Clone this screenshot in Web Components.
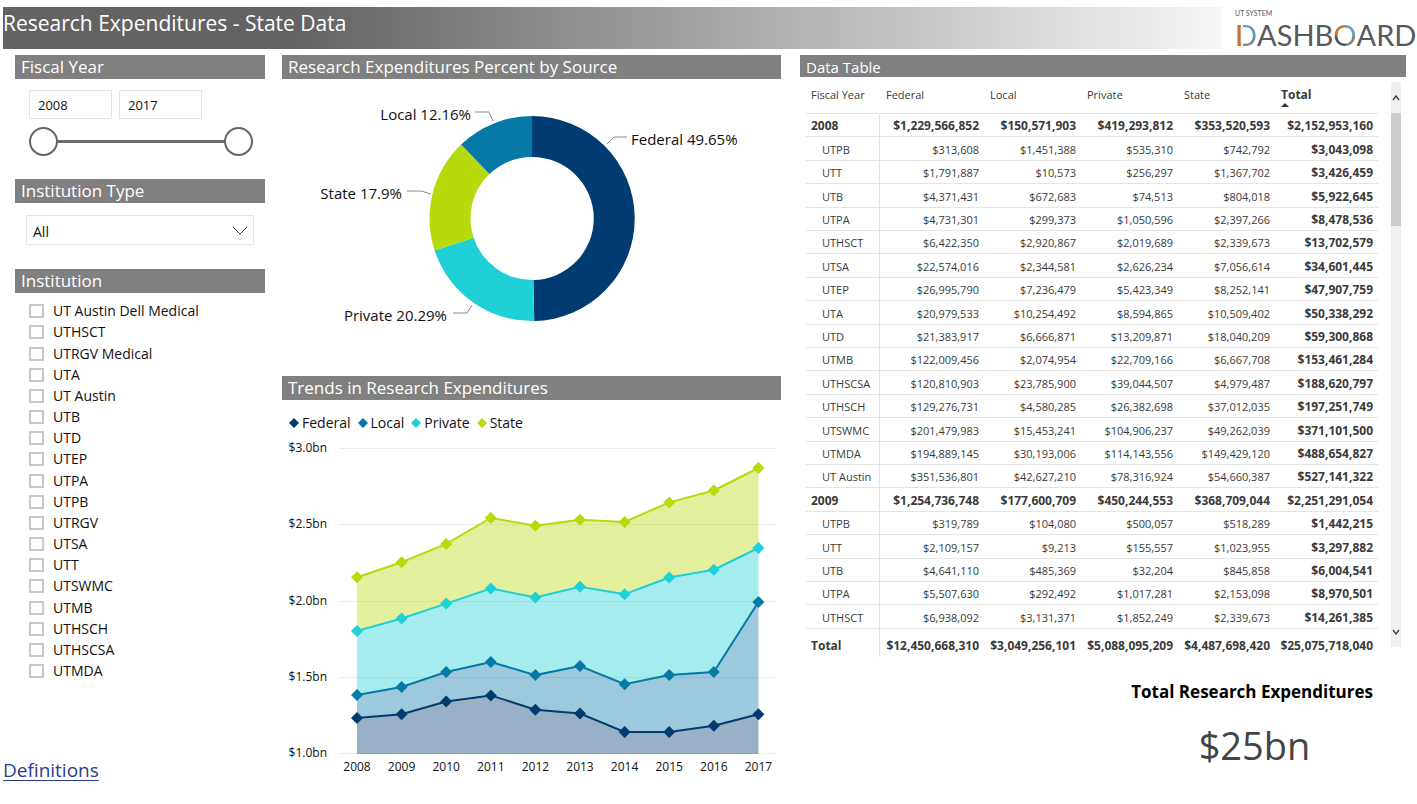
<!DOCTYPE html>
<html lang="en">
<head>
<meta charset="utf-8">
<meta name="viewport" content="width=device-width, initial-scale=1">
<title>Research Expenditures - State Data</title>
<style>
  html { background: #fff; }
  body {
    margin: 0;
    font-family: "Open Sans", "Noto Sans", sans-serif;
    color: #111;
    --bar: #808080;
    --line: #e4e4e4;
    --federal: #003c71;
    --local: #0779a7;
    --private: #1fd0d6;
    --state: #b6da0b;
  }
</style>
</head>
<body>
<research-dashboard></research-dashboard>

<script>
const define = (name, html, setup) => {
  const template = document.createElement('template');
  template.innerHTML = html;
  customElements.define(name, class extends HTMLElement {
    constructor() {
      super();
      this.attachShadow({ mode: 'open' }).append(template.content.cloneNode(true));
      if (setup) setup(this.shadowRoot, this);
    }
  });
};

/* ---------- logo ---------- */
define('dash-logo', `
  <style>
    :host { display: block; font-family: Lato, sans-serif; color: #58595b; white-space: nowrap; }
    .small { display: block; font-size: 7px; line-height: 8px; }
    .word { display: flex; font-size: 29px; line-height: 35px; }
    .d, .o { color: transparent; -webkit-background-clip: text; background-clip: text; }
    .d { background-image: linear-gradient(90deg, #d0702c 0 6px, #fff 6px 8px, transparent 8px),
                           linear-gradient(180deg, #5f9fba 0 50%, #808285 70%); }
    .o { background-image: conic-gradient(#5f9fba 0 90deg, #808285 100deg 170deg, #4d4e50 180deg 250deg, #d0702c 270deg 350deg, #5f9fba 360deg); }
  </style>
  <span class="small">UT SYSTEM</span>
  <span class="word"><span class="d">D</span><span>ASHB</span><span class="o">O</span><span>ARD</span></span>
`);

/* ---------- page header ---------- */
define('dash-header', `
  <style>
    :host { display: flex; align-items: flex-start; gap: 13px; padding: 7px 0 0 3px; }
    h1 {
      flex: 1; margin: 0; height: 42px; font-size: 21px; font-weight: 400; line-height: 33px;
      color: #fff; background: linear-gradient(90deg, #636363 24%, #f7f7f7);
    }
    dash-logo { flex: none; width: 182px; padding-top: 2px; }
  </style>
  <h1><slot></slot></h1>
  <dash-logo></dash-logo>
`);

/* ---------- titled panel ---------- */
define('dash-panel', `
  <style>
    :host { display: block; }
    h2 {
      margin: 0; padding: 0 6px; background: var(--bar); color: #fff;
      font-size: 17px; font-weight: 400; line-height: 24px;
    }
    :host([compact]) h2 { font-size: 15px; line-height: 22px; padding-top: 1px; height: 21px; overflow: hidden; }
  </style>
  <h2></h2>
  <slot></slot>
`, (root, host) => {
  root.querySelector('h2').textContent = host.getAttribute('heading');
});

/* ---------- fiscal year range ---------- */
define('year-range', `
  <style>
    :host { display: block; padding: 11px 12px 0 14px; }
    .boxes { display: flex; gap: 7px; }
    .boxes input {
      box-sizing: border-box; width: 83px; height: 29px; border: 1px solid var(--line); padding: 0 8px;
      font: 13px "Open Sans", sans-serif; color: #111; background: #fff;
    }
    .track { display: grid; align-items: center; margin-top: 8px; }
    .track > * { grid-area: 1 / 1; }
    .bar { height: 3px; margin: 0 14px; background: #6b6b6b; }
    .track input {
      appearance: none; -webkit-appearance: none; margin: 0; width: 100%; height: 29px;
      background: transparent; pointer-events: none;
    }
    .track input::-webkit-slider-thumb {
      -webkit-appearance: none; box-sizing: border-box; width: 29px; height: 29px; border-radius: 50%;
      border: 2px solid #666; background: #fff; pointer-events: auto;
    }
  </style>
  <div class="boxes">
    <input type="text" value="2008" aria-label="From year">
    <input type="text" value="2017" aria-label="To year">
  </div>
  <div class="track">
    <span class="bar"></span>
    <input type="range" min="2008" max="2017" value="2008" aria-label="First year">
    <input type="range" min="2008" max="2017" value="2017" aria-label="Last year">
  </div>
`, root => {
  const boxes = root.querySelectorAll('.boxes input');
  root.querySelectorAll('.track input').forEach((range, i) =>
    range.addEventListener('input', () => { boxes[i].value = range.value; }));
});

/* ---------- institution type ---------- */
define('type-picker', `
  <style>
    :host { display: block; padding: 12px 11px 0; }
    .wrap { display: grid; align-items: center; }
    .wrap > * { grid-area: 1 / 1; }
    select {
      appearance: none; -webkit-appearance: none; width: 100%; height: 30px; border: 1px solid var(--line);
      border-radius: 0; background: #fff; padding: 2px 6px 0; font: 14px "Open Sans", sans-serif; color: #111;
    }
    svg { justify-self: end; margin-right: 6px; pointer-events: none; }
  </style>
  <div class="wrap">
    <select aria-label="Institution Type"><option>All</option></select>
    <svg width="16" height="9" viewBox="0 0 16 9"><path d="M1 1l7 7 7-7" fill="none" stroke="#333"/></svg>
  </div>
`);

/* ---------- institution check list ---------- */
define('institution-list', `
  <style>
    :host { display: block; padding: 7px 0 0 14px; }
    ul { list-style: none; margin: 0; padding: 0; }
    li { height: 21px; }
    li:nth-child(6n+2) { height: 22px; }
    label { display: flex; align-items: center; gap: 9px; font-size: 14px; line-height: 21px; }
    input {
      appearance: none; -webkit-appearance: none; box-sizing: border-box; margin: 0; width: 15px; height: 14px;
      border: 2px solid #c8c8c8; background: #fff;
    }
    input:checked { background: #666; }
  </style>
  <ul></ul>
`, root => {
  const names = ['UT Austin Dell Medical', 'UTHSCT', 'UTRGV Medical', 'UTA', 'UT Austin', 'UTB', 'UTD', 'UTEP', 'UTPA',
    'UTPB', 'UTRGV', 'UTSA', 'UTT', 'UTSWMC', 'UTMB', 'UTHSCH', 'UTHSCSA', 'UTMDA'];
  root.querySelector('ul').innerHTML =
    names.map(n => `<li><label><input type="checkbox">${n}</label></li>`).join('');
});

/* ---------- donut ---------- */
define('donut-chart', `
  <style>
    :host { display: block; }
    svg { display: block; width: 100%; }
    text { font-size: 15px; fill: #111; }
    polyline { fill: none; stroke: #8a8a8a; }
  </style>
  <svg viewBox="0 0 499 297" role="img" aria-label="Research expenditures percent by source">
    <g id="ring"></g>
    <polyline points="325,65 332,58 345,58"/>
    <polyline points="211,42 207,33 193,33"/>
    <polyline points="149,115 139,112 125,112"/>
    <polyline points="190,226 185,234 171,234"/>
    <text x="349" y="66">Federal 49.65%</text>
    <text x="189" y="41" text-anchor="end">Local 12.16%</text>
    <text x="120" y="120" text-anchor="end">State 17.9%</text>
    <text x="165" y="242" text-anchor="end">Private 20.29%</text>
  </svg>
`, root => {
  const slices = [['federal', 49.65], ['private', 20.29], ['state', 17.9], ['local', 12.16]];
  const cx = 250, cy = 139.5, R = 102.5, r = 61.5;
  const at = (p, rad) => {
    const a = p / 100 * 2 * Math.PI;
    return (cx + rad * Math.sin(a)).toFixed(2) + ' ' + (cy - rad * Math.cos(a)).toFixed(2);
  };
  let start = 0;
  root.querySelector('#ring').innerHTML = slices.map(([name, share]) => {
    const end = start + share;
    const d = `M${at(start, R)}A${R} ${R} 0 0 1 ${at(end, R)}L${at(end, r)}A${r} ${r} 0 0 0 ${at(start, r)}Z`;
    start = end;
    return `<path d="${d}" style="fill:var(--${name})"/>`;
  }).join('');
});

/* ---------- trend ---------- */
define('trend-chart', `
  <style>
    :host { display: block; }
    ul { display: flex; gap: 6px; list-style: none; margin: 0; padding: 12px 6px 0; font-size: 14px; line-height: 22px; }
    li { display: flex; align-items: center; gap: 3px; }
    li svg { width: 11px; height: 11px; }
    .plot { display: block; width: 100%; }
    text { font-size: 12px; fill: #111; }
    .grid { stroke: #ececf0; }
  </style>
  <ul>
    <li><svg viewBox="0 0 11 11"><path d="M6 0l5 5-5 5-5-5z" style="fill:var(--federal)"/></svg>Federal</li>
    <li><svg viewBox="0 0 11 11"><path d="M6 0l5 5-5 5-5-5z" style="fill:var(--local)"/></svg>Local</li>
    <li><svg viewBox="0 0 11 11"><path d="M6 0l5 5-5 5-5-5z" style="fill:var(--private)"/></svg>Private</li>
    <li><svg viewBox="0 0 11 11"><path d="M6 0l5 5-5 5-5-5z" style="fill:var(--state)"/></svg>State</li>
  </ul>
  <svg class="plot" viewBox="0 0 499 345" role="img" aria-label="Trends in research expenditures"></svg>
`, root => {
  const data = {
    federal: [1.2296, 1.2547, 1.338, 1.378, 1.284, 1.259, 1.138, 1.138, 1.179, 1.254],
    local: [1.38, 1.433, 1.531, 1.597, 1.511, 1.57, 1.451, 1.511, 1.531, 1.99],
    private: [1.8, 1.882, 1.98, 2.079, 2.02, 2.09, 2.041, 2.151, 2.202, 2.344],
    state: [2.153, 2.251, 2.371, 2.541, 2.49, 2.53, 2.515, 2.643, 2.721, 2.869]
  };
  const x = i => +(75 + i * 44.6).toFixed(1);
  const y = v => +(319 - (v - 1) * 152.5).toFixed(1);
  let out = '';
  for (const v of [3, 2.5, 2, 1.5, 1]) {
    const gy = Math.round(y(v)) + 0.5;
    out += `<path class="grid" d="M57 ${gy}H494"/><text x="45" y="${Math.round(y(v)) + 4}" text-anchor="end">$${v.toFixed(1)}bn</text>`;
  }
  let floor = Array(10).fill(0.994), areas = '', lines = '';
  for (const [name, values] of Object.entries(data)) {
    const top = values.map((v, i) => x(i) + ' ' + y(v));
    const base = floor.map((v, i) => x(i) + ' ' + y(v)).reverse();
    areas += `<path d="M${top.join('L')}L${base.join('L')}Z" style="fill:var(--${name});fill-opacity:.4"/>`;
    lines += `<path d="M${top.join('L')}" style="fill:none;stroke:var(--${name});stroke-width:2"/>`;
    lines += values.map((v, i) => `<path d="M${x(i)} ${y(v) - 6}l6 6-6 6-6-6z" style="fill:var(--${name})"/>`).join('');
    floor = values;
  }
  out += areas + lines;
  for (let i = 0; i < 10; i++) out += `<text x="${x(i)}" y="337" text-anchor="middle">${2008 + i}</text>`;
  root.querySelector('.plot').innerHTML = out;
});

/* ---------- scroll rail ---------- */
define('scroll-rail', `
  <style>
    :host { display: flex; flex-direction: column; width: 10px; background: #f0f0f0; }
    button { display: grid; place-items: center; flex: none; height: 31px; border: 0; padding: 0; background: none; }
    .thumb { height: 113px; background: #cdcdcd; }
    .rest { flex: 1; }
  </style>
  <button type="button" aria-label="Scroll up"><svg width="8" height="6" viewBox="0 0 8 6"><path d="M1 5l3-4 3 4" fill="none" stroke="#444" stroke-width="1.4"/></svg></button>
  <div class="thumb"></div>
  <div class="rest"></div>
  <button type="button" aria-label="Scroll down"><svg width="8" height="6" viewBox="0 0 8 6"><path d="M1 1l3 4 3-4" fill="none" stroke="#444" stroke-width="1.4"/></svg></button>
`);

/* ---------- data matrix ---------- */
define('data-matrix', `
  <style>
    :host { display: flex; align-items: flex-start; gap: 13px; padding: 5px 5px 0 6px; }
    table { flex: 1; width: 0; table-layout: fixed; border-collapse: separate; border-spacing: 0; color: #3a3a3a; font-size: 11px; }
    th, td { padding: 0 5px; border-bottom: 1px solid var(--line); white-space: nowrap; text-align: right; font-weight: 400; line-height: 16px; }
    th { text-align: left; }
    tr > :first-child { border-right: 1px solid var(--line); }
    thead th { height: 31px; vertical-align: top; line-height: 26px; }
    thead tr > :first-child { border-right-color: transparent; }
    thead tr > :not(:first-child) { padding-left: 6px; }
    .sorted { font-weight: 700; font-size: 12px; }
    .sorted span { position: relative; display: inline-block; }
    .sorted svg { position: absolute; left: 0; bottom: 1px; }
    tbody tr { height: 23px; }
    tbody tr:nth-child(5n+2), tbody tr:nth-child(5n+4) { height: 24px; }
    tbody th, tbody td { padding-top: 2px; }
    tbody th { padding-left: 16px; padding-right: 0; }
    .year > *, tfoot th, tfoot td, td:last-child { font-weight: 700; font-size: 12px; }
    .year th { padding-left: 5px; }
    tfoot tr { height: 28px; }
    tfoot th, tfoot td { border-bottom: 0; padding-top: 6px; }
    scroll-rail { height: 565px; }
  </style>
  <table>
    <colgroup><col style="width:74px"><col style="width:104px"><col style="width:97px"><col style="width:97px"><col style="width:97px"><col style="width:103px"></colgroup>
    <thead><tr>
      <th scope="col">Fiscal Year</th><th scope="col">Federal</th><th scope="col">Local</th><th scope="col">Private</th><th scope="col">State</th>
      <th scope="col" class="sorted" aria-sort="ascending"><span>Total<svg width="8" height="4" viewBox="0 0 8 4"><path d="M0 4l4-4 4 4z" fill="#333"/></svg></span></th>
    </tr></thead>
    <tbody></tbody>
    <tfoot></tfoot>
  </table>
  <scroll-rail></scroll-rail>
`, root => {
  const rows = `2008|1,229,566,852|150,571,903|419,293,812|353,520,593|2,152,953,160
UTPB|313,608|1,451,388|535,310|742,792|3,043,098
UTT|1,791,887|10,573|256,297|1,367,702|3,426,459
UTB|4,371,431|672,683|74,513|804,018|5,922,645
UTPA|4,731,301|299,373|1,050,596|2,397,266|8,478,536
UTHSCT|6,422,350|2,920,867|2,019,689|2,339,673|13,702,579
UTSA|22,574,016|2,344,581|2,626,234|7,056,614|34,601,445
UTEP|26,995,790|7,236,479|5,423,349|8,252,141|47,907,759
UTA|20,979,533|10,254,492|8,594,865|10,509,402|50,338,292
UTD|21,383,917|6,666,871|13,209,871|18,040,209|59,300,868
UTMB|122,009,456|2,074,954|22,709,166|6,667,708|153,461,284
UTHSCSA|120,810,903|23,785,900|39,044,507|4,979,487|188,620,797
UTHSCH|129,276,731|4,580,285|26,382,698|37,012,035|197,251,749
UTSWMC|201,479,983|15,453,241|104,906,237|49,262,039|371,101,500
UTMDA|194,889,145|30,193,006|114,143,556|149,429,120|488,654,827
UT Austin|351,536,801|42,627,210|78,316,924|54,660,387|527,141,322
2009|1,254,736,748|177,600,709|450,244,553|368,709,044|2,251,291,054
UTPB|319,789|104,080|500,057|518,289|1,442,215
UTT|2,109,157|9,213|155,557|1,023,955|3,297,882
UTB|4,641,110|485,369|32,204|845,858|6,004,541
UTPA|5,507,630|292,492|1,017,281|2,153,098|8,970,501
UTHSCT|6,938,092|3,131,371|1,852,249|2,339,673|14,261,385`.split('\n');
  const row = line => {
    const [name, ...cells] = line.split('|');
    return `<tr${/^\d/.test(name) ? ' class="year"' : ''}><th scope="row">${name}</th>${cells.map(c => `<td>$${c}</td>`).join('')}</tr>`;
  };
  root.querySelector('tbody').innerHTML = rows.map(row).join('');
  root.querySelector('tfoot').innerHTML = row('Total|12,450,668,310|3,049,256,101|5,088,095,209|4,487,698,420|25,075,718,040');
});

/* ---------- headline figure ---------- */
define('kpi-card', `
  <style>
    :host { display: block; padding: 23px 33px 0 0; text-align: right; }
    h3 { margin: 0; font-size: 17px; font-weight: 700; line-height: 24px; color: #000; }
    p { margin: 15px 0 0; font-size: 38px; line-height: 52px; color: #444; width: 237px; margin-left: auto; text-align: center; }
  </style>
  <h3><slot name="label"></slot></h3>
  <p><slot></slot></p>
`);

/* ---------- page ---------- */
define('research-dashboard', `
  <style>
    :host { display: block; }
    main { display: grid; grid-template-columns: 262px minmax(0, 499fr) minmax(0, 608fr); column-gap: 17px; padding: 3px 11px 0 3px; }
    .filters, .charts, .figures { display: flex; flex-direction: column; }
    .filters { gap: 23px; }
    .filters dash-panel { margin-left: 12px; }
    .filters .list { margin-top: 1px; }
    .figures { padding-left: 2px; }
    a { margin-top: 53px; align-self: flex-start; font-size: 19px; line-height: 26px; color: #2b3c8c; text-underline-offset: 3px; text-decoration-thickness: 1px; }
  </style>
  <dash-header>Research Expenditures - State Data</dash-header>
  <main>
    <div class="filters">
      <dash-panel heading="Fiscal Year"><year-range></year-range></dash-panel>
      <dash-panel heading="Institution Type"><type-picker></type-picker></dash-panel>
      <dash-panel class="list" heading="Institution"><institution-list></institution-list></dash-panel>
      <a href="#definitions">Definitions</a>
    </div>
    <div class="charts">
      <dash-panel heading="Research Expenditures Percent by Source"><donut-chart></donut-chart></dash-panel>
      <dash-panel heading="Trends in Research Expenditures"><trend-chart></trend-chart></dash-panel>
    </div>
    <div class="figures">
      <dash-panel compact heading="Data Table"><data-matrix></data-matrix></dash-panel>
      <kpi-card><span slot="label">Total Research Expenditures</span>$25bn</kpi-card>
    </div>
  </main>
`);
</script>
</body>
</html>
